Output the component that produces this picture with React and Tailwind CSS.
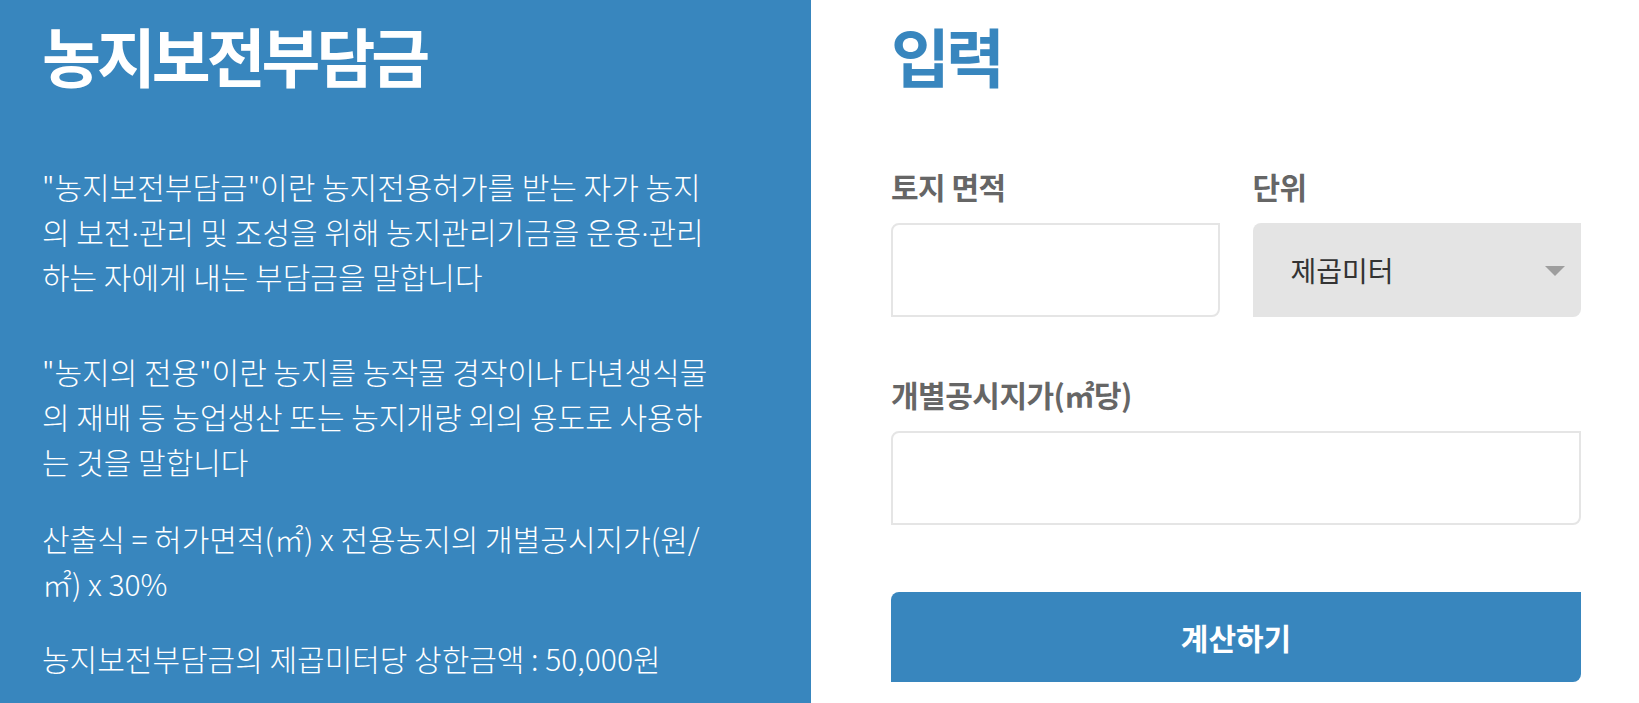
import React from "react";

const font = { fontFamily: '"Noto Sans CJK KR", "Noto Sans", sans-serif' };

function Dot() {
  return <span className="leading-none font-['Noto_Sans','DejaVu_Sans',sans-serif]">·</span>;
}

export default function App() {
  return (
    <div className="flex w-full h-[703px] overflow-hidden bg-white" style={font}>
      <div className="w-[811px] shrink-0 bg-[#3886be] pl-[42px] pt-[14px] text-white">
        <h1 className="text-[64px] leading-[80px] font-bold tracking-[-4px]">농지보전부담금</h1>
        <div className="w-[683px] text-[30px] leading-[45px] font-light mt-[70px]">
          <p>"농지보전부담금"이란 농지전용허가를 받는 자가 농지의 보전<Dot />관리 및 조성을 위해 농지관리기금을 운용<Dot />관리하는 자에게 내는 부담금을 말합니다</p>
          <p className="mt-[50px]">"농지의 전용"이란 농지를 농작물 경작이나 다년생식물의 재배 등 농업생산 또는 농지개량 외의 용도로 사용하는 것을 말합니다</p>
          <p className="mt-[32px]">산출식 = 허가면적(㎡) x 전용농지의 개별공시지가(원/㎡) x 30%</p>
          <p className="mt-[30px]">농지보전부담금의 제곱미터당 상한금액 : 50,000원</p>
        </div>
      </div>
      <div className="flex-1 pl-[80px] pt-[14px]">
        <h2 className="text-[64px] leading-[80px] font-bold tracking-[-4px] text-[#3886be]">입력</h2>
        <div className="w-[690px] mt-[72px]">
          <div className="grid grid-cols-2 gap-x-[33px]">
            <div>
              <label className="block text-[30px] leading-[40px] font-bold text-[#666666] tracking-[-0.5px]">토지 면적</label>
              <input className="mt-[17px] block w-full h-[94px] border-2 border-[#e5e5e5] rounded-tl-lg rounded-br-lg bg-white outline-none px-4 text-[26px]" />
            </div>
            <div>
              <label className="block text-[30px] leading-[40px] font-bold text-[#666666] tracking-[-0.5px]">단위</label>
              <div className="mt-[17px] relative h-[94px] bg-[#e4e4e4] rounded-tl-lg rounded-br-lg flex items-center pl-[38px]">
                <span className="text-[28px] text-[#333333]">제곱미터</span>
                <span className="absolute right-[16px] top-[43px] w-0 h-0 border-l-[10px] border-r-[10px] border-t-[10px] border-l-transparent border-r-transparent border-t-[#9e9e9e]"></span>
              </div>
            </div>
          </div>
          <div className="mt-[57px]">
            <label className="block text-[30px] leading-[40px] font-bold text-[#666666] tracking-[-0.5px]">개별공시지가(㎡당)</label>
            <input className="mt-[17px] block w-full h-[94px] border-2 border-[#e5e5e5] rounded-tl-lg rounded-br-lg bg-white outline-none px-4 text-[26px]" />
          </div>
          <button className="mt-[67px] w-full h-[90px] bg-[#3886be] rounded-tl-lg rounded-br-lg text-white text-[30px] font-bold">계산하기</button>
        </div>
      </div>
    </div>
  );
}
